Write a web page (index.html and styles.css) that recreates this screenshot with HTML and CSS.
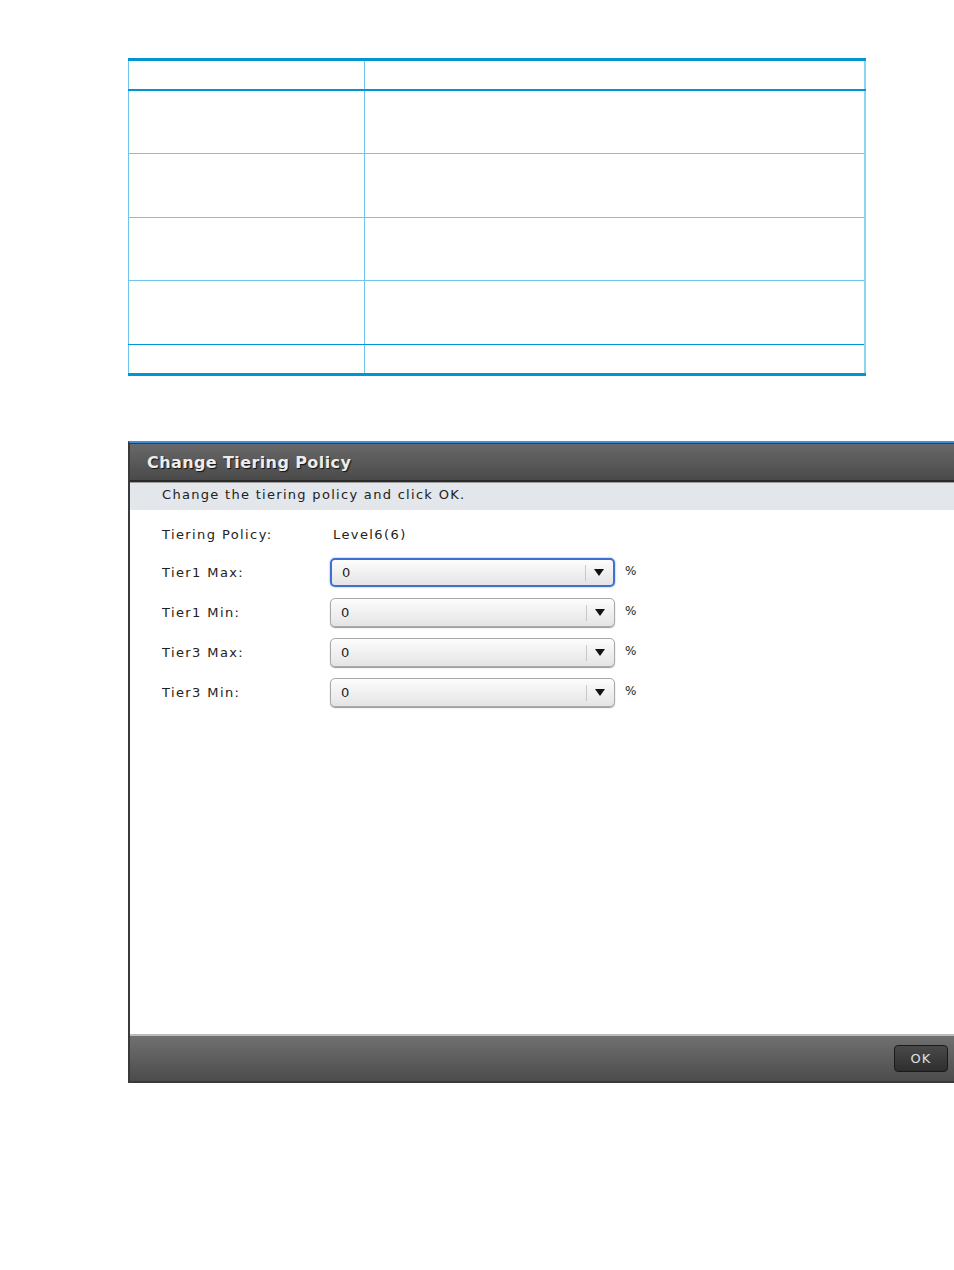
FILE: index.html
```html
<!DOCTYPE html>
<html lang="en">
<head>
    <meta charset="UTF-8">
    <meta name="viewport" content="width=device-width, initial-scale=1.0">
    <title>Change Tiering Policy</title>
    <link rel="stylesheet" href="styles.css">
</head>
<body>
    <div id="page">
        <table class="grid">
            <tr class="head"><td class="c1"></td><td></td></tr>
            <tr class="row r1"><td class="c1"></td><td></td></tr>
            <tr class="row"><td class="c1"></td><td></td></tr>
            <tr class="row r3"><td class="c1"></td><td></td></tr>
            <tr class="row last"><td class="c1"></td><td></td></tr>
            <tr class="tail"><td class="c1"></td><td></td></tr>
        </table>

        <div class="dialog">
            <div class="title">Change Tiering Policy</div>
            <div class="hint">Change the tiering policy and click OK.</div>
            <div class="body">
                <div class="field">
                    <span class="label">Tiering Policy:</span>
                    <span class="value">Level6(6)</span>
                </div>
                <div class="field">
                    <span class="label">Tier1 Max:</span>
                    <div class="combo focus"><span class="txt">0</span><span class="sep"></span><span class="arrow"></span></div>
                    <span class="unit">%</span>
                </div>
                <div class="field">
                    <span class="label">Tier1 Min:</span>
                    <div class="combo"><span class="txt">0</span><span class="sep"></span><span class="arrow"></span></div>
                    <span class="unit">%</span>
                </div>
                <div class="field">
                    <span class="label">Tier3 Max:</span>
                    <div class="combo"><span class="txt">0</span><span class="sep"></span><span class="arrow"></span></div>
                    <span class="unit">%</span>
                </div>
                <div class="field">
                    <span class="label">Tier3 Min:</span>
                    <div class="combo"><span class="txt">0</span><span class="sep"></span><span class="arrow"></span></div>
                    <span class="unit">%</span>
                </div>
            </div>
            <div class="foot">
                <span class="btn">OK</span>
            </div>
        </div>
    </div>
</body>
</html>
```

FILE: styles.css
```css
*{
    padding: 0;
    margin: 0;
    box-sizing: border-box;
}
html, body{
    overflow: hidden;
    background: #fff;
}
body{
    width: 954px;
    height: 1270px;
    font-family: "DejaVu Sans", Verdana, sans-serif;
}
#page{
    padding: 58px 0 0 128px;
}

/* table */
.grid{
    width: 738px;
    border-collapse: collapse;
    border-left: 1px solid #6fc6ee;
    border-right: 2px solid #8fd3f2;
}
.grid td{
    border-left: 1px solid #6fc6ee;
    padding: 0;
}
.grid td.c1{
    width: 236px;
    border-left: none;
}
.grid .head td{
    height: 30px;
    border-top: 3px solid #0096d6;
    border-bottom: 2px solid #0096d6;
}
.grid .row td{
    height: 64px;
    border-bottom: 1px solid #6fc6ee;
}
.grid .row.r1 td{
    height: 64px;
}
.grid .row.r3 td{
    height: 63px;
}
.grid .row.last td{
    border-bottom: 1px solid #0096d6;
}
.grid .tail td{
    height: 30px;
    border-bottom: 3px solid #0096d6;
}

/* dialog */
.dialog{
    margin-top: 65px;
    width: 826px;
    height: 642px;
    display: flex;
    flex-direction: column;
    border-left: 2px solid #3a3a3a;
    border-top: 2px solid #3d8ee0;
    background: #fff;
}
.dialog .title{
    height: 39px;
    padding-left: 17px;
    line-height: 37px;
    font-size: 16px;
    font-weight: bold;
    color: #ececec;
    letter-spacing: 0.4px;
    text-shadow: 1px 1px 1px #111;
    background: linear-gradient(#686868, #4a4a4a);
    border-top: 1px solid #3a3a3a;
    border-bottom: 2px solid #2a2a2a;
}
.dialog .hint{
    height: 28px;
    padding-left: 32px;
    line-height: 24px;
    font-size: 13px;
    color: #222;
    background: #e3e6ea;
    border-top: 1px solid #9a9a9a;
    letter-spacing: 1.3px;
}
.dialog .body{
    flex: 1;
    padding: 12px 0 0 32px;
    display: flex;
    flex-direction: column;
    gap: 11px;
}
.field{
    display: flex;
    align-items: center;
    font-size: 13px;
    color: #222;
    letter-spacing: 1.4px;
}
.field:first-child{
    height: 24px;
    margin-bottom: 1px;
}
.field .label{
    width: 171px;
}
.combo{
    position: relative;
    width: 285px;
    height: 29px;
    margin-left: -3px;
    border: 1px solid #a8a8a8;
    border-radius: 5px;
    background: linear-gradient(#fdfdfd, #e4e4e4);
    box-shadow: 0 1px 1px #999;
    display: flex;
    align-items: center;
}
.combo.focus{
    border: 2px solid #3f6fd0;
    box-shadow: 0 0 2px #6d95e6;
}
.combo .txt{
    padding-left: 10px;
    flex: 1;
    letter-spacing: 0;
}
.combo .sep{
    width: 1px;
    height: 16px;
    background: #c8c8c8;
    margin-right: 8px;
}
.combo .arrow{
    width: 0;
    height: 0;
    margin-right: 9px;
    border-left: 5px solid transparent;
    border-right: 5px solid transparent;
    border-top: 7px solid #111;
}
.unit{
    margin-left: 10px;
    margin-top: -3px;
    font-size: 12px;
    letter-spacing: 0;
}

/* footer */
.foot{
    height: 49px;
    display: flex;
    justify-content: flex-end;
    align-items: center;
    padding-right: 6px;
    background: linear-gradient(#707070, #4c4c4c);
    border-top: 2px solid #bdbdbd;
    border-bottom: 2px solid #3a3a3a;
}
.btn{
    width: 54px;
    height: 27px;
    line-height: 25px;
    text-align: center;
    font-size: 13px;
    color: #e0e0e0;
    border: 1px solid #1a1a1a;
    border-radius: 4px;
    background: linear-gradient(#4a4a4a, #2e2e2e);
    letter-spacing: 1px;
}
```
